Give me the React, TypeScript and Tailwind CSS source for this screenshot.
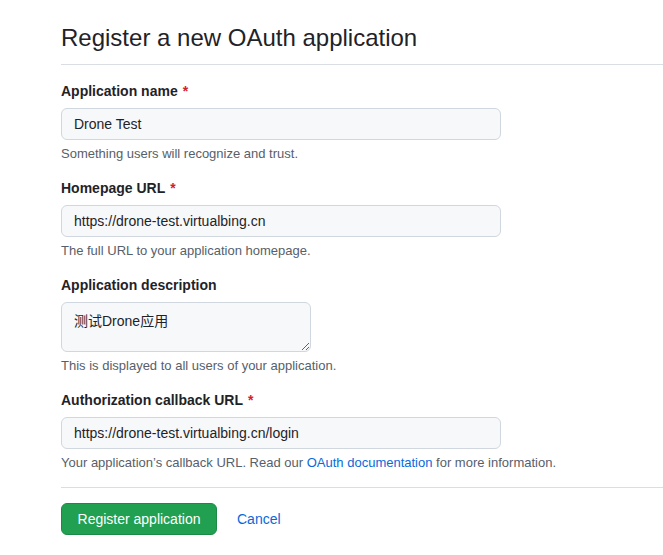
import React from 'react';

const font = { fontFamily: '"Liberation Sans", Arial, "Noto Sans CJK SC", sans-serif' };

interface FieldProps {
  label: string;
  required?: boolean;
  children: React.ReactNode;
  hint: React.ReactNode;
}

const Field: React.FC<FieldProps> = ({ label, required, children, hint }) => (
  <div className="mt-[15px]">
    <label className="block text-[14px] leading-[20px] font-bold text-[#1f2328] mb-[7px]">
      {label}
      {required && <span className="text-[#cf222e] ml-[5px]">*</span>}
    </label>
    {children}
    <p className="mt-[5px] text-[13px] leading-[18px] text-[#57606a]">{hint}</p>
  </div>
);

const inputCls =
  'block w-[440px] h-[32px] px-[12px] text-[14px] text-[#1f2328] bg-[#f6f8fa] border border-[#d0d7de] rounded-[6px] outline-none';

export default function App() {
  return (
    <div className="min-h-screen bg-white pl-[61px] pt-[22px]" style={font}>
      {/* Encabezado */}
      <h1 className="text-[24px] leading-[32px] font-normal text-[#1f2328] pb-[10px] border-b border-[#d8dee4]">
        Register a new OAuth application
      </h1>

      <form className="pt-[1px]" onSubmit={(e) => e.preventDefault()}>
        <Field label="Application name" required hint="Something users will recognize and trust.">
          <input className={inputCls} defaultValue="Drone Test" />
        </Field>

        <Field label="Homepage URL" required hint="The full URL to your application homepage.">
          <input className={inputCls} defaultValue="https://drone-test.virtualbing.cn" />
        </Field>

        <Field label="Application description" hint="This is displayed to all users of your application.">
          <textarea
            className="block w-[250px] h-[50px] px-[12px] py-[8px] text-[14px] leading-[20px] text-[#1f2328] bg-[#f6f8fa] border border-[#d0d7de] rounded-[6px] outline-none resize"
            defaultValue="测试Drone应用"
          />
        </Field>

        <Field
          label="Authorization callback URL"
          required
          hint={
            <>
              Your application’s callback URL. Read our{' '}
              <a href="#" className="text-[#0969da]">OAuth documentation</a> for more information.
            </>
          }
        >
          <input className={inputCls} defaultValue="https://drone-test.virtualbing.cn/login" />
        </Field>

        <hr className="mt-[15px] border-t border-[#d8dee4]" />

        {/* Acciones */}
        <div className="flex items-center gap-[20px] mt-[15px]">
          <button
            type="submit"
            className="h-[32px] w-[156px] rounded-[6px] bg-[#22a052] border border-[#1c8a46] text-white text-[14px]"
          >
            Register application
          </button>
          <a href="#" className="text-[14px] text-[#0969da]">Cancel</a>
        </div>
      </form>
    </div>
  );
}
